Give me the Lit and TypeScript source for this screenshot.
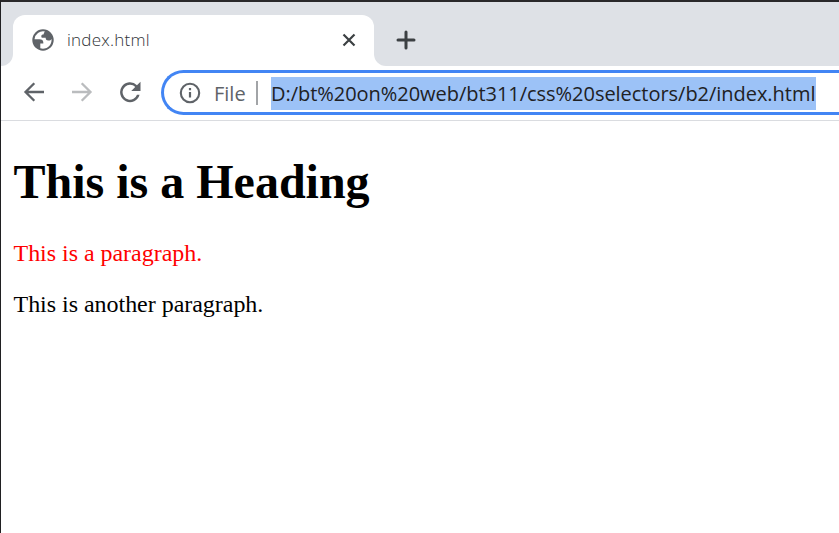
import { LitElement, html, css } from "lit";
import { customElement } from "lit/decorators.js";

@customElement("browser-tabs")
class BrowserTabs extends LitElement {
  static styles = css`
    :host { display: flex; flex-direction: column; height: 64px; background: #fff; font-family: "Open Sans", "Noto Sans", sans-serif; }
    .top { height: 13px; background: #dee1e6; }
    .row { display: flex; height: 51px; }
    .lead { width: 12px; background: #dee1e6; border-bottom-right-radius: 12px; }
    .holder { width: 361px; background: linear-gradient(#dee1e6 0 14px, #fff 14px); }
    .tab { display: flex; align-items: center; box-sizing: border-box; height: 51px; background: #fff; border-radius: 12px 12px 0 0; padding: 0 13px 1px 18px; }
    .title { flex: 1; margin-left: 12px; font-size: 17px; line-height: 24px; padding-bottom: 1px; color: #303337; font-weight: 350; letter-spacing: 0.24px; }
    .rest { flex: 1; background: #dee1e6; border-bottom-left-radius: 12px; padding: 13px 0 0 20px; }
    svg { display: block; }
  `;
  render() {
    return html`
      <div class="top"></div>
      <div class="row">
        <div class="lead"></div>
        <div class="holder">
          <div class="tab">
            <svg width="24" height="24" viewBox="0 0 24 24">
              <circle cx="12" cy="12" r="10.7" fill="#5f6368" />
              <path fill="#fff" d="M14 3.600A8.600 8.600 0 0 0 3.500 11.300H8.300C11.300 11.300 12.600 12.700 12.300 15.500H9.300V20.200A8.600 8.600 0 0 0 20.500 11C19.800 12.200 18.600 12.700 17.200 12.500C15.200 12.300 14.600 11.300 14.700 9.700H10.800C9.700 7.900 10.400 6.500 12.500 6.500C13 5 13.200 4.500 14 3.600Z" />
            </svg>
            <span class="title">index.html</span>
            <svg width="24" height="24" viewBox="0 0 24 24"><path d="M6.500 6.500l11 11m0-11l-11 11" stroke="#3c4043" stroke-width="2.200" fill="none" /></svg>
          </div>
        </div>
        <div class="rest">
          <svg width="24" height="24" viewBox="0 0 24 24"><path d="M12 4v16M4 12h16" stroke="#3c4043" stroke-width="3" stroke-linecap="round" /></svg>
        </div>
      </div>`;
  }
}

@customElement("browser-toolbar")
class BrowserToolbar extends LitElement {
  static styles = css`
    :host { display: flex; box-sizing: border-box; height: 55px; border-bottom: 1px solid #dadce0; background: #fff; padding: 4px 0 0 20px; font-family: "Open Sans", "Noto Sans", sans-serif; }
    .nav { display: flex; gap: 22px; padding-top: 9px; width: 140px; }
    .nav svg { flex: none; }
    svg { display: block; }
    .box { flex: 1; display: flex; align-items: center; box-sizing: border-box; height: 45px; border: 3px solid #4285f4; border-right: 0; border-radius: 23px 0 0 23px; padding: 1px 0 0 14px; font-size: 20px; white-space: nowrap; }
    .scheme { width: 42px; margin-left: 12px; color: #5f6368; line-height: 33px; }
    .bar { width: 2px; height: 24px; background: #a2a4a7; margin-right: 13px; }
    .url { width: 545px; height: 33px; line-height: 33px; background: #9cc2f7; color: #202124; letter-spacing: -0.035px; }
  `;
  render() {
    return html`
      <div class="nav">
        <svg width="26" height="26" viewBox="0 0 26 26"><path d="M23 13H5M13.300 4.200L4.500 13l8.800 8.800" stroke="#5f6368" stroke-width="2.300" fill="none" /></svg>
        <svg width="26" height="26" viewBox="0 0 26 26"><path d="M3 13h18M12.700 4.200l8.800 8.800-8.800 8.800" stroke="#babcbe" stroke-width="2.300" fill="none" /></svg>
        <svg width="26" height="26" viewBox="1.47 1.3 21.05 21.05">
          <path fill="#5f6368" d="M17.650 6.350A8 8 0 1 0 19.730 14h-2.080A6 6 0 1 1 12 6c1.660 0 3.140.690 4.220 1.780L13 11h7.500V3.500z" />
        </svg>
      </div>
      <div class="box">
        <svg width="24" height="24" viewBox="0 0 24 24"><circle cx="12" cy="12" r="9.200" stroke="#5f6368" stroke-width="2.100" fill="none" /><path d="M12 11v5.500M12 7v2.200" stroke="#5f6368" stroke-width="2.200" /></svg>
        <span class="scheme">File</span>
        <span class="bar"></span>
        <span class="url">D:/bt%20on%20web/bt311/css%20selectors/b2/index.html</span>
      </div>`;
  }
}

@customElement("app-root")
class AppRoot extends LitElement {
  static styles = css`
    :host { display: block; box-sizing: border-box; width: 839px; height: 533px; overflow: hidden; border-left: 1px solid #202022; border-top: 2px solid #29282a; background: #fff; }
    .page { padding: 0 12.500px; font-family: "Liberation Serif", "Times New Roman", serif; font-size: 24px; line-height: 27px; color: #000; }
    h1 { margin: 0; padding-top: 33px; font-size: 48px; line-height: 55px; font-weight: 700; }
    p { margin: 0; letter-spacing: -0.03px; }
    .first { margin-top: 31px; color: #f00; }
    .second { margin-top: 24px; }
  `;
  render() {
    return html`
      <browser-tabs></browser-tabs>
      <browser-toolbar></browser-toolbar>
      <main class="page">
        <h1>This is a Heading</h1>
        <p class="first">This is a paragraph.</p>
        <p class="second">This is another paragraph.</p>
      </main>`;
  }
}
